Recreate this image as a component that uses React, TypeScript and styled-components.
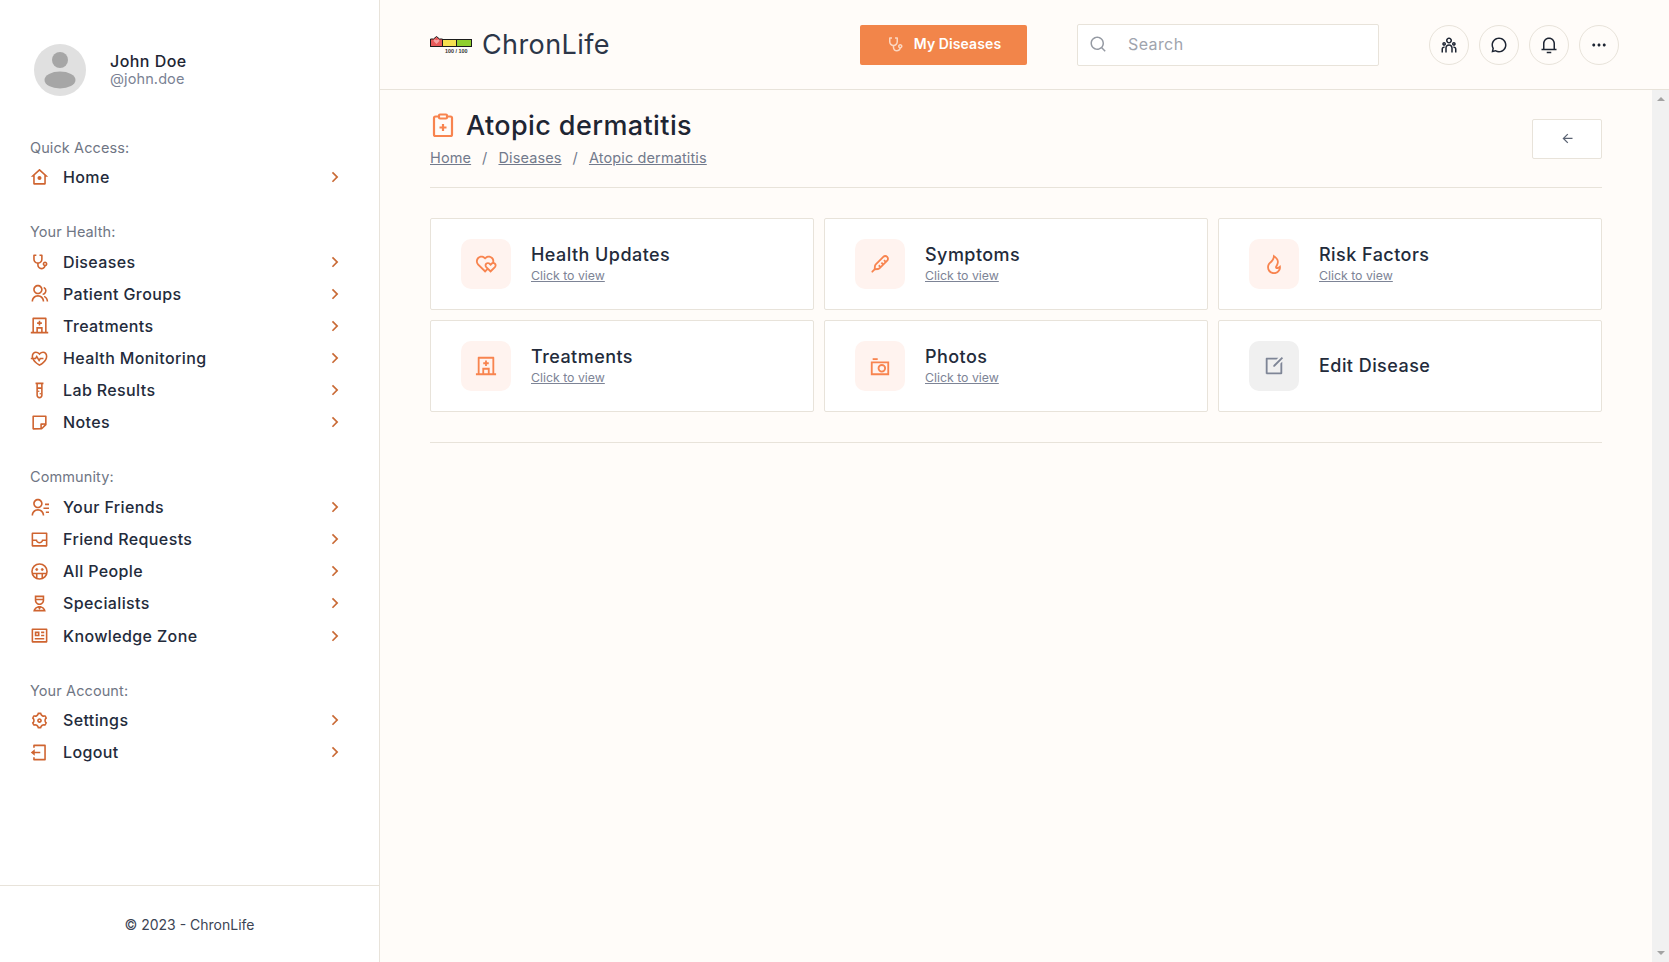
import React from 'react';
import styled, { createGlobalStyle } from 'styled-components';
import {
  RiHome7Line, RiStethoscopeLine, RiGroupLine, RiHospitalLine, RiHeartPulseLine, RiTestTubeLine,
  RiStickyNoteLine, RiContactsLine, RiInboxLine, RiNurseLine, RiProfileLine,
  RiSettings3Line, RiLogoutBoxLine, RiArrowRightSLine, RiArrowLeftLine, RiSearchLine, RiTeamLine,
  RiChat3Line, RiNotification3Line, RiMoreFill, RiHeartsLine, RiThermometerLine, RiFireLine,
  RiEditBoxLine,
} from 'react-icons/ri';

const FONT = `"Inter", "Liberation Sans", sans-serif`;
const ORANGE = '#f2854a';
const LINE = '#e8e3da';

const Global = createGlobalStyle`
  html, body { margin: 0; padding: 0; height: 100%; background: #fffcf9; overflow: hidden; }
  body { font-family: ${FONT}; color: #1e2533; }
  * { box-sizing: border-box; }
`;

const Shell = styled.div`display: flex; width: 1669px; height: 962px; overflow: hidden;`;
const Sidebar = styled.aside`
  width: 380px; flex: none; background: #fff; border-right: 1px solid ${LINE};
  display: flex; flex-direction: column;
`;
const SideScroll = styled.div`flex: 1; padding: 44px 30px 0;`;
const Profile = styled.div`display: flex; align-items: center; gap: 24px; padding-left: 4px; margin-bottom: 40.5px;`;
const AvatarWrap = styled.div`width: 52px; height: 52px; flex: none;`;
const ProfileText = styled.div`display: flex; flex-direction: column;`;
const Name = styled.span`font-size: 16px; font-weight: 450; line-height: 18px; letter-spacing: .45px;`;
const Handle = styled.span`font-size: 14.5px; line-height: 18px; color: #7a8294; letter-spacing: .1px;`;
const Group = styled.section`margin-bottom: 28px;`;
const GroupLabel = styled.div`font-size: 14.5px; line-height: 22px; font-weight: 400; color: #6f7684; letter-spacing: .1px; margin-bottom: 2.5px;`;
const Row = styled.div`display: flex; align-items: center; height: 32.15px;`;
const RowIcon = styled.span`width: 33px; display: flex; color: #cf6430; font-size: 19px;`;
const RowText = styled.span`flex: 1; font-size: 16px; font-weight: 450; letter-spacing: .38px; color: #232b3b;`;
const RowArrow = styled.span`display: flex; color: #c96a35; font-size: 20px; margin-right: 4px;`;
const SideFooter = styled.div`
  height: 77px; border-top: 1px solid ${LINE}; display: flex; align-items: center; justify-content: center;
  font-size: 14px; color: #3c4454;
`;
const Main = styled.main`flex: 1; min-width: 0; display: flex; flex-direction: column;`;
const Header = styled.header`
  height: 90px; flex: none; border-bottom: 1px solid ${LINE}; display: flex; align-items: center; padding: 0 50px;
`;
const Brand = styled.div`display: flex; align-items: center; gap: 10px; width: 430px;`;
const BrandName = styled.span`font-size: 27px; color: #2c3648; letter-spacing: .4px; font-weight: 400; padding-bottom: 1px;`;
const Cta = styled.button`
  width: 167px; height: 40px; background: ${ORANGE}; border: 0; border-radius: 2px; color: #fff; display: flex; align-items: center;
  justify-content: center; gap: 10px; font: 600 14px ${FONT}; letter-spacing: .1px; padding: 0 0 2px;
  svg { color: #fbd7c2; font-size: 18px; }
`;
const SearchBox = styled.div`
  width: 302px; height: 42px; margin-left: 50px; border: 1px solid ${LINE}; border-radius: 2px; background: #fff; display: flex; align-items: center;
  padding: 0 0 2px 11px; gap: 21px; color: #a0a4ad; font-size: 16px; letter-spacing: .4px;
  svg { font-size: 18px; color: #959aa3; }
`;
const RoundGroup = styled.div`display: flex; gap: 10px; margin-left: 50px;`;
const RoundButton = styled.div`
  width: 40px; height: 40px; border-radius: 50%; border: 1px solid ${LINE}; display: flex; align-items: center; justify-content: center;
  font-size: 18px; color: #1e2533;
`;
const ContentRow = styled.div`flex: 1; min-height: 0; display: flex;`;
const Content = styled.div`flex: 1; min-width: 0; padding: 0 50px;`;
const FakeScrollbar = styled.div`
  width: 17px; flex: none; background: #f1f1f1; display: flex; flex-direction: column; justify-content: space-between; align-items: center;
  padding: 7px 0;
`;
const ScrollArrow = styled.span<{ $down?: boolean }>`
  width: 0; height: 0; border-left: 4px solid transparent; border-right: 4px solid transparent;
  ${p => (p.$down ? 'border-top: 4px solid #a3a3a3;' : 'border-bottom: 4px solid #a3a3a3;')}
`;
const PageHead = styled.div`display: flex; justify-content: space-between; align-items: flex-start; height: 98px; padding-top: 15px; border-bottom: 1px solid ${LINE};`;
const TitleLine = styled.div`display: flex; align-items: center; gap: 11px; height: 40px; padding-left: 1px;`;
const Title = styled.h1`margin: 0; font-size: 27px; font-weight: 450; letter-spacing: .4px; color: #1e2533;`;
const Crumbs = styled.nav`display: flex; gap: 11px; margin-top: 2px; font-size: 14.5px; line-height: 22px; color: #727a8c; letter-spacing: .12px;`;
const Crumb = styled.span`text-decoration: underline;`;
const BackButton = styled.div`
  width: 70px; height: 40px; margin-top: 14px; border: 1px solid ${LINE}; border-radius: 2px; background: #fff; display: flex; align-items: center;
  justify-content: center; font-size: 15px; color: #5b6373; padding-bottom: 2px;
`;
const CardGrid = styled.div`
  display: grid; grid-template-columns: repeat(3, 1fr); grid-auto-rows: 92px; gap: 10px; padding: 30px 0; border-bottom: 1px solid ${LINE};
`;
const Card = styled.div`
  background: #fff; border: 1px solid ${LINE}; border-radius: 2px; display: flex; align-items: center; padding-left: 30px; gap: 20px;
`;
const IconTile = styled.div<{ $muted?: boolean }>`
  width: 50px; height: 50px; border-radius: 10px; flex: none; display: flex; align-items: center; justify-content: center; font-size: 22px;
  background: ${p => (p.$muted ? '#f0f0f0' : '#fff3ef')};
  color: ${p => (p.$muted ? '#7e8596' : '#f8844f')};
`;
const CardText = styled.div`display: flex; flex-direction: column;`;
const CardTitle = styled.div`font-size: 18px; font-weight: 450; line-height: 22px; letter-spacing: .45px; color: #232b3b;`;
const CardLink = styled.div`font-size: 12.3px; line-height: 18px; margin-top: 1px; color: #7d8496; text-decoration: underline;`;

const Avatar = () => (
  <svg width="52" height="52" viewBox="0 0 52 52">
    <circle cx="26" cy="26" r="26" fill="#e0e0e0" />
    <circle cx="26" cy="16" r="8" fill="#a6a6a6" />
    <ellipse cx="26" cy="36" rx="15.5" ry="8.5" fill="#a6a6a6" />
  </svg>
);

const Logo = () => (
  <svg width="42" height="18" viewBox="0 0 42 18">
    <rect x="0" y="3" width="42" height="8" fill="#1c1c1c" />
    <rect x="13" y="4" width="13" height="6" fill="#f5e050" />
    <rect x="27" y="4" width="14" height="6" fill="#8fcf2e" />
    <path d="M.5 3h3L6.5.5 9.5 3h3v7.5H.5z" fill="#e85a5a" stroke="#1c1c1c" />
    <path d="M6.5 8 3.8 5.3c-.8-1.4 1.2-2.6 2.7-1 1.5-1.6 3.5-.4 2.7 1z" fill="#f4a4a4" />
    <text x="15" y="16.8" fontFamily="Liberation Sans, sans-serif" fontSize="5.4" fontWeight="700" fill="#333">100 / 100</text>
  </svg>
);

const ClipboardPlus = () => (
  <svg width="24" height="26" viewBox="0 0 24 26" fill="none" stroke="#f8844f" strokeWidth="2.2">
    <rect x="3" y="4.5" width="18" height="19.5" rx="1.5" />
    <rect x="8" y="2.5" width="8" height="4" rx="1" fill="#fffcf9" />
    <path d="M12 12v7M8.5 15.5h7" />
  </svg>
);

const CrowdIcon = () => (
  <svg width="1em" height="1em" viewBox="0 0 24 24" fill="none" stroke="currentColor" strokeWidth="2">
    <circle cx="12" cy="12" r="9.5" />
    <circle cx="8.5" cy="9.5" r="1.3" fill="currentColor" strokeWidth="1" />
    <circle cx="15.5" cy="9.5" r="1.3" fill="currentColor" strokeWidth="1" />
    <path d="M3.5 14.5h17M8.5 14.5V21M15.5 14.5V21" />
  </svg>
);

const CameraBarIcon = () => (
  <svg width="1em" height="1em" viewBox="0 0 24 24" fill="none" stroke="currentColor" strokeWidth="2">
    <path d="M3 8h18v13H3z" />
    <path d="M4 4.5h5.5" />
    <circle cx="14" cy="14.5" r="3.6" />
  </svg>
);

type Item = [React.ComponentType, string];
const groups: { label: string; items: Item[] }[] = [
  { label: 'Quick Access:', items: [[RiHome7Line, 'Home']] },
  { label: 'Your Health:', items: [[RiStethoscopeLine, 'Diseases'], [RiGroupLine, 'Patient Groups'], [RiHospitalLine, 'Treatments'], [RiHeartPulseLine, 'Health Monitoring'], [RiTestTubeLine, 'Lab Results'], [RiStickyNoteLine, 'Notes']] },
  { label: 'Community:', items: [[RiContactsLine, 'Your Friends'], [RiInboxLine, 'Friend Requests'], [CrowdIcon, 'All People'], [RiNurseLine, 'Specialists'], [RiProfileLine, 'Knowledge Zone']] },
  { label: 'Your Account:', items: [[RiSettings3Line, 'Settings'], [RiLogoutBoxLine, 'Logout']] },
];
const cards: { icon: React.ComponentType; title: string; link?: boolean; muted?: boolean }[] = [
  { icon: RiHeartsLine, title: 'Health Updates', link: true },
  { icon: RiThermometerLine, title: 'Symptoms', link: true },
  { icon: RiFireLine, title: 'Risk Factors', link: true },
  { icon: RiHospitalLine, title: 'Treatments', link: true },
  { icon: CameraBarIcon, title: 'Photos', link: true },
  { icon: RiEditBoxLine, title: 'Edit Disease', muted: true },
];

export default function App() {
  return (
    <Shell>
      <Global />
      <Sidebar>
        <SideScroll>
          <Profile>
            <AvatarWrap><Avatar /></AvatarWrap>
            <ProfileText><Name>John Doe</Name><Handle>@john.doe</Handle></ProfileText>
          </Profile>
          {groups.map(g => (
            <Group key={g.label}>
              <GroupLabel>{g.label}</GroupLabel>
              {g.items.map(([Icon, text]) => (
                <Row key={text}>
                  <RowIcon><Icon /></RowIcon>
                  <RowText>{text}</RowText>
                  <RowArrow><RiArrowRightSLine /></RowArrow>
                </Row>
              ))}
            </Group>
          ))}
        </SideScroll>
        <SideFooter>© 2023 - ChronLife</SideFooter>
      </Sidebar>
      <Main>
        <Header>
          <Brand><Logo /><BrandName>ChronLife</BrandName></Brand>
          <Cta><RiStethoscopeLine /> My Diseases</Cta>
          <SearchBox><RiSearchLine /> <span>Search</span></SearchBox>
          <RoundGroup>
            <RoundButton><RiTeamLine /></RoundButton>
            <RoundButton><RiChat3Line /></RoundButton>
            <RoundButton><RiNotification3Line /></RoundButton>
            <RoundButton><RiMoreFill /></RoundButton>
          </RoundGroup>
        </Header>
        <ContentRow>
          <Content>
            <PageHead>
              <div>
                <TitleLine><ClipboardPlus /><Title>Atopic dermatitis</Title></TitleLine>
                <Crumbs><Crumb>Home</Crumb><span>/</span><Crumb>Diseases</Crumb><span>/</span><Crumb>Atopic dermatitis</Crumb></Crumbs>
              </div>
              <BackButton><RiArrowLeftLine /></BackButton>
            </PageHead>
            <CardGrid>
              {cards.map(c => {
                const Icon = c.icon;
                return (
                  <Card key={c.title}>
                    <IconTile $muted={c.muted}><Icon /></IconTile>
                    <CardText>
                      <CardTitle>{c.title}</CardTitle>
                      {c.link && <CardLink>Click to view</CardLink>}
                    </CardText>
                  </Card>
                );
              })}
            </CardGrid>
          </Content>
          <FakeScrollbar><ScrollArrow /><ScrollArrow $down /></FakeScrollbar>
        </ContentRow>
      </Main>
    </Shell>
  );
}
